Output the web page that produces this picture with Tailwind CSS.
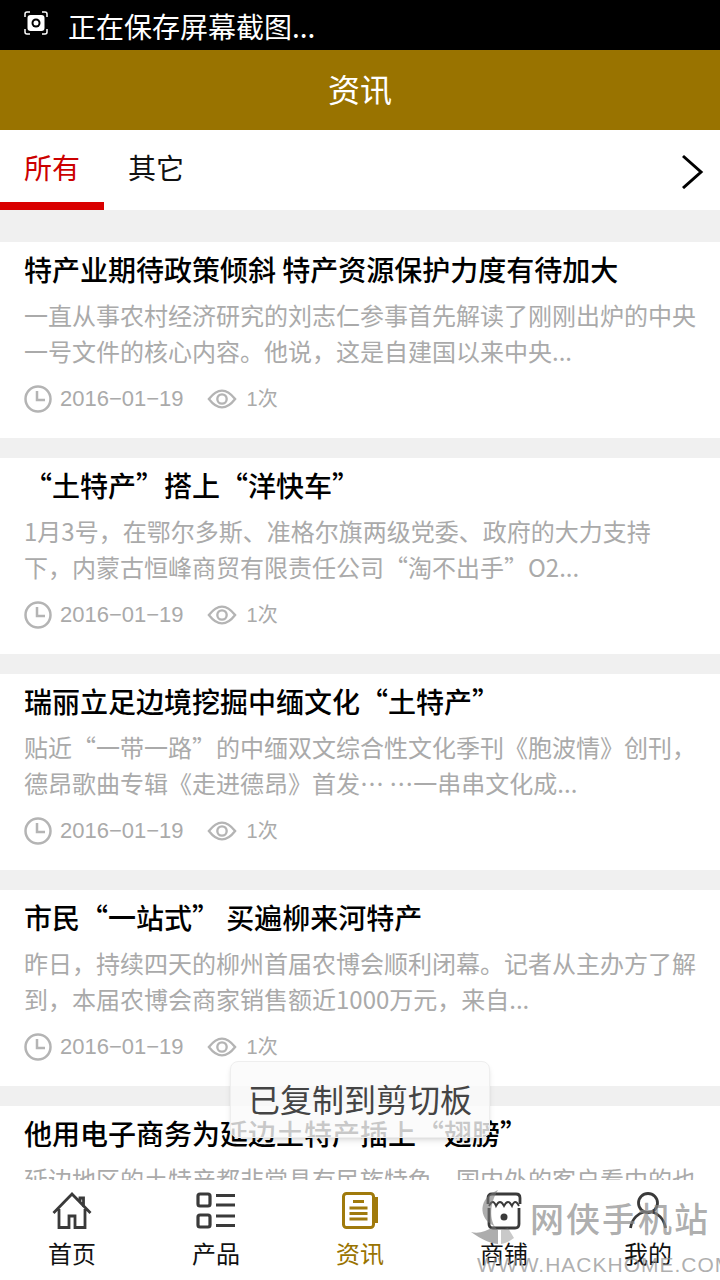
<!DOCTYPE html>
<html lang="zh-CN">
<head>
  <meta charset="UTF-8" />
  <meta name="viewport" content="width=device-width, initial-scale=1" />
  <title>资讯</title>
  <script src="https://cdn.jsdelivr.net/npm/@tailwindcss/browser@4"></script>
</head>
<body class="bg-[#f0f0f0] font-['Noto_Sans_CJK_SC','Liberation_Sans',sans-serif]">
  <div class="relative w-[720px] h-[1280px] overflow-hidden">
    <!-- status bar -->
    <div class="h-[50px] bg-black flex items-center pl-6 text-white">
      <svg width="24" height="24" viewBox="0 0 24 24" class="mr-[20px] mb-[4px]">
        <path d="M1 6V3Q1 1 3 1H6M18 1h3Q23 1 23 3V6M23 18v3Q23 23 21 23H18M6 23H3Q1 23 1 21V18" fill="none" stroke="#fff" stroke-width="1.500"/>
        <rect x="3.500" y="4" width="17" height="16" rx="3" fill="#fff"/>
        <circle cx="12" cy="12" r="4.500" fill="#000"/>
        <circle cx="12" cy="12" r="2.500" fill="#fff"/>
      </svg>
      <span class="text-[28px] leading-none pt-[2px]">正在保存屏幕截图...</span>
    </div>

    <header class="h-20 bg-[#997300] flex items-center justify-center text-white text-[32px] pb-[4px]">资讯</header>

    <!-- tabs -->
    <nav class="h-20 bg-white flex items-stretch text-[28px] relative">
      <div class="w-[104px] border-b-8 border-[#d90000] text-[#cc0000] flex items-center justify-center pt-[2px]">所有</div>
      <div class="w-[104px] text-[#111] flex items-center justify-center pb-[6px]">其它</div>
      <svg width="24" height="36" viewBox="0 0 24 36" class="absolute right-[16px] top-[23px]">
        <path d="M3 3l18 16L3 35" fill="none" stroke="#000" stroke-width="3"/>
      </svg>
    </nav>

    <!-- news list -->
    <main class="pt-8 flex flex-col gap-5">
      <article class="h-[196px] bg-white px-6 pt-[7px]">
        <h2 class="text-[28px] leading-10 font-medium text-black whitespace-nowrap">特产业期待政策倾斜 特产资源保护力度有待加大</h2>
        <p class="text-[24px] leading-[36px] text-[#aaa] mt-[8px]">一直从事农村经济研究的刘志仁参事首先解读了刚刚出炉的中央一号文件的核心内容。他说，这是自建国以来中央...</p>
        <div class="flex items-center mt-[13px] text-[#aaa] font-['Liberation_Sans','Noto_Sans_CJK_SC',sans-serif]">
          <svg width="28" height="28" viewBox="0 0 28 28" class="mr-[8px]"><circle cx="14" cy="14" r="12.500" fill="none" stroke="#b4b4b4" stroke-width="2.500"/><path d="M13 6v9h8" fill="none" stroke="#b4b4b4" stroke-width="2.500"/></svg>
          <span class="text-[22px]">2016−01−19</span>
          <svg width="30" height="22" viewBox="0 0 32 22" class="ml-[23px] mr-[10px]"><path d="M2 11Q16-7 30 11 16 29 2 11Z" fill="none" stroke="#b4b4b4" stroke-width="2.500"/><circle cx="16" cy="11" r="5" fill="none" stroke="#b4b4b4" stroke-width="2.500"/></svg>
          <span class="text-[20px]">1次</span>
        </div>
      </article>

      <article class="h-[196px] bg-white px-6 pt-[7px]">
        <h2 class="text-[28px] leading-10 font-medium text-black whitespace-nowrap">“土特产”搭上“洋快车”</h2>
        <p class="text-[24px] leading-[36px] text-[#aaa] mt-[8px]">1月3号，在鄂尔多斯、准格尔旗两级党委、政府的大力支持下，内蒙古恒峰商贸有限责任公司“淘不出手”O2...</p>
        <div class="flex items-center mt-[13px] text-[#aaa] font-['Liberation_Sans','Noto_Sans_CJK_SC',sans-serif]">
          <svg width="28" height="28" viewBox="0 0 28 28" class="mr-[8px]"><circle cx="14" cy="14" r="12.500" fill="none" stroke="#b4b4b4" stroke-width="2.500"/><path d="M13 6v9h8" fill="none" stroke="#b4b4b4" stroke-width="2.500"/></svg>
          <span class="text-[22px]">2016−01−19</span>
          <svg width="30" height="22" viewBox="0 0 32 22" class="ml-[23px] mr-[10px]"><path d="M2 11Q16-7 30 11 16 29 2 11Z" fill="none" stroke="#b4b4b4" stroke-width="2.500"/><circle cx="16" cy="11" r="5" fill="none" stroke="#b4b4b4" stroke-width="2.500"/></svg>
          <span class="text-[20px]">1次</span>
        </div>
      </article>

      <article class="h-[196px] bg-white px-6 pt-[7px]">
        <h2 class="text-[28px] leading-10 font-medium text-black whitespace-nowrap">瑞丽立足边境挖掘中缅文化“土特产”</h2>
        <p class="text-[24px] leading-[36px] text-[#aaa] mt-[8px]">贴近“一带一路”的中缅双文综合性文化季刊《胞波情》创刊，德昂歌曲专辑《走进德昂》首发… …一串串文化成...</p>
        <div class="flex items-center mt-[13px] text-[#aaa] font-['Liberation_Sans','Noto_Sans_CJK_SC',sans-serif]">
          <svg width="28" height="28" viewBox="0 0 28 28" class="mr-[8px]"><circle cx="14" cy="14" r="12.500" fill="none" stroke="#b4b4b4" stroke-width="2.500"/><path d="M13 6v9h8" fill="none" stroke="#b4b4b4" stroke-width="2.500"/></svg>
          <span class="text-[22px]">2016−01−19</span>
          <svg width="30" height="22" viewBox="0 0 32 22" class="ml-[23px] mr-[10px]"><path d="M2 11Q16-7 30 11 16 29 2 11Z" fill="none" stroke="#b4b4b4" stroke-width="2.500"/><circle cx="16" cy="11" r="5" fill="none" stroke="#b4b4b4" stroke-width="2.500"/></svg>
          <span class="text-[20px]">1次</span>
        </div>
      </article>

      <article class="h-[196px] bg-white px-6 pt-[7px]">
        <h2 class="text-[28px] leading-10 font-medium text-black whitespace-nowrap">市民“一站式” 买遍柳来河特产</h2>
        <p class="text-[24px] leading-[36px] text-[#aaa] mt-[8px]">昨日，持续四天的柳州首届农博会顺利闭幕。记者从主办方了解到，本届农博会商家销售额近1000万元，来自...</p>
        <div class="flex items-center mt-[13px] text-[#aaa] font-['Liberation_Sans','Noto_Sans_CJK_SC',sans-serif]">
          <svg width="28" height="28" viewBox="0 0 28 28" class="mr-[8px]"><circle cx="14" cy="14" r="12.500" fill="none" stroke="#b4b4b4" stroke-width="2.500"/><path d="M13 6v9h8" fill="none" stroke="#b4b4b4" stroke-width="2.500"/></svg>
          <span class="text-[22px]">2016−01−19</span>
          <svg width="30" height="22" viewBox="0 0 32 22" class="ml-[23px] mr-[10px]"><path d="M2 11Q16-7 30 11 16 29 2 11Z" fill="none" stroke="#b4b4b4" stroke-width="2.500"/><circle cx="16" cy="11" r="5" fill="none" stroke="#b4b4b4" stroke-width="2.500"/></svg>
          <span class="text-[20px]">1次</span>
        </div>
      </article>

      <article class="h-[196px] bg-white px-6 pt-[7px]">
        <h2 class="text-[28px] leading-10 font-medium text-black whitespace-nowrap">他用电子商务为延边土特产插上“翅膀”</h2>
        <p class="text-[24px] leading-[36px] text-[#aaa] mt-[8px]">延边地区的土特产都非常具有民族特色，国内外的客户看中的也</p>
      </article>
    </main>

    <!-- tab bar -->
    <footer class="absolute left-0 right-0 bottom-0 h-[100px] bg-white grid grid-cols-5 text-[24px] text-[#111] text-center">
      <div class="flex flex-col items-center pt-[12px]">
        <svg width="40" height="38" viewBox="0 0 40 38" fill="none" stroke="#3a3a3a" stroke-width="2.800"><path d="M1.500 21L20 2l18.500 19M28 10V6h3.500v9M7 17v18.500h10V24h6v11.500h10V17"/></svg>
        <span class="mt-[8px] leading-[30px]">首页</span>
      </div>
      <div class="flex flex-col items-center pt-[12px]">
        <svg width="40" height="38" viewBox="0 0 40 38" fill="none" stroke="#3a3a3a" stroke-width="3.200"><rect x="2" y="2" width="12" height="12" rx="2"/><rect x="2" y="23" width="12" height="12" rx="2"/><path d="M20 3.500h19M20 13h19M20 24h19M20 33.500h19"/></svg>
        <span class="mt-[8px] leading-[30px]">产品</span>
      </div>
      <div class="flex flex-col items-center pt-[12px] text-[#997300]">
        <svg width="36" height="38" viewBox="0 0 36 38" fill="none" stroke="#a07a0c" stroke-width="3"><rect x="1.500" y="1.500" width="30" height="34" rx="3"/><path d="M34.500 5v26M11 9.500h11M7.500 16h18M7.500 21.500h18M7.500 27h18"/></svg>
        <span class="mt-[8px] leading-[30px]">资讯</span>
      </div>
      <div class="flex flex-col items-center pt-[12px]">
        <svg width="36" height="38" viewBox="0 0 36 38" fill="none" stroke="#3a3a3a" stroke-width="2.800"><path d="M2 12V6q0-4 4-4h24q4 0 4 4v6M3 16v16q0 4 4 4h22q4 0 4-4V16"/><path d="M3 14q4-8 7 0 4-8 8 0 4-8 8 0 3-8 7 0" stroke-width="1.800"/><circle cx="18" cy="25" r="3.500" fill="#3a3a3a" stroke="none"/></svg>
        <span class="mt-[8px] leading-[30px]">商铺</span>
      </div>
      <div class="flex flex-col items-center pt-[12px]">
        <svg width="38" height="38" viewBox="0 0 38 38" fill="none" stroke="#3a3a3a" stroke-width="2.800"><circle cx="19" cy="11" r="9.500"/><path d="M1.500 36C3 26 10 21 15 20M36.500 36C35 26 28 21 23 20"/></svg>
        <span class="mt-[8px] leading-[30px]">我的</span>
      </div>
    </footer>

    <!-- toast -->
    <div class="absolute left-[230px] top-[1061px] w-[260px] h-[77px] rounded-lg bg-[#fafafa]/80 border border-[#eee] shadow-md flex items-center justify-center text-[32px] text-[#444] pb-[4px]">已复制到剪切板</div>

    <!-- watermark -->
    <svg width="76" height="62" viewBox="0 0 76 62" class="absolute left-[470px] top-[1188px]">
      <path d="M28 2C8 10 8 30 24 38 16 44 8 46 1 44 12 52 22 56 28 56V42C20 36 18 18 28 2Z" fill="#777" fill-opacity=".6"/>
      <path d="M31 56C36 55 40 53 44 50L38 40 31 42Z" fill="#777" fill-opacity=".4"/>
    </svg>
    <div class="absolute left-[530px] top-[1197px] text-[34px] leading-[42px] font-medium tracking-[2px] text-[#8c8c8c]/70 whitespace-nowrap">网侠手机站</div>
    <div class="absolute left-[477px] top-[1250px] text-[21px] leading-[30px] tracking-[1px] text-[#8c8c8c]/70 whitespace-nowrap font-['Liberation_Sans',sans-serif]">WWW.HACKHOME.COM</div>
  </div>
</body>
</html>
